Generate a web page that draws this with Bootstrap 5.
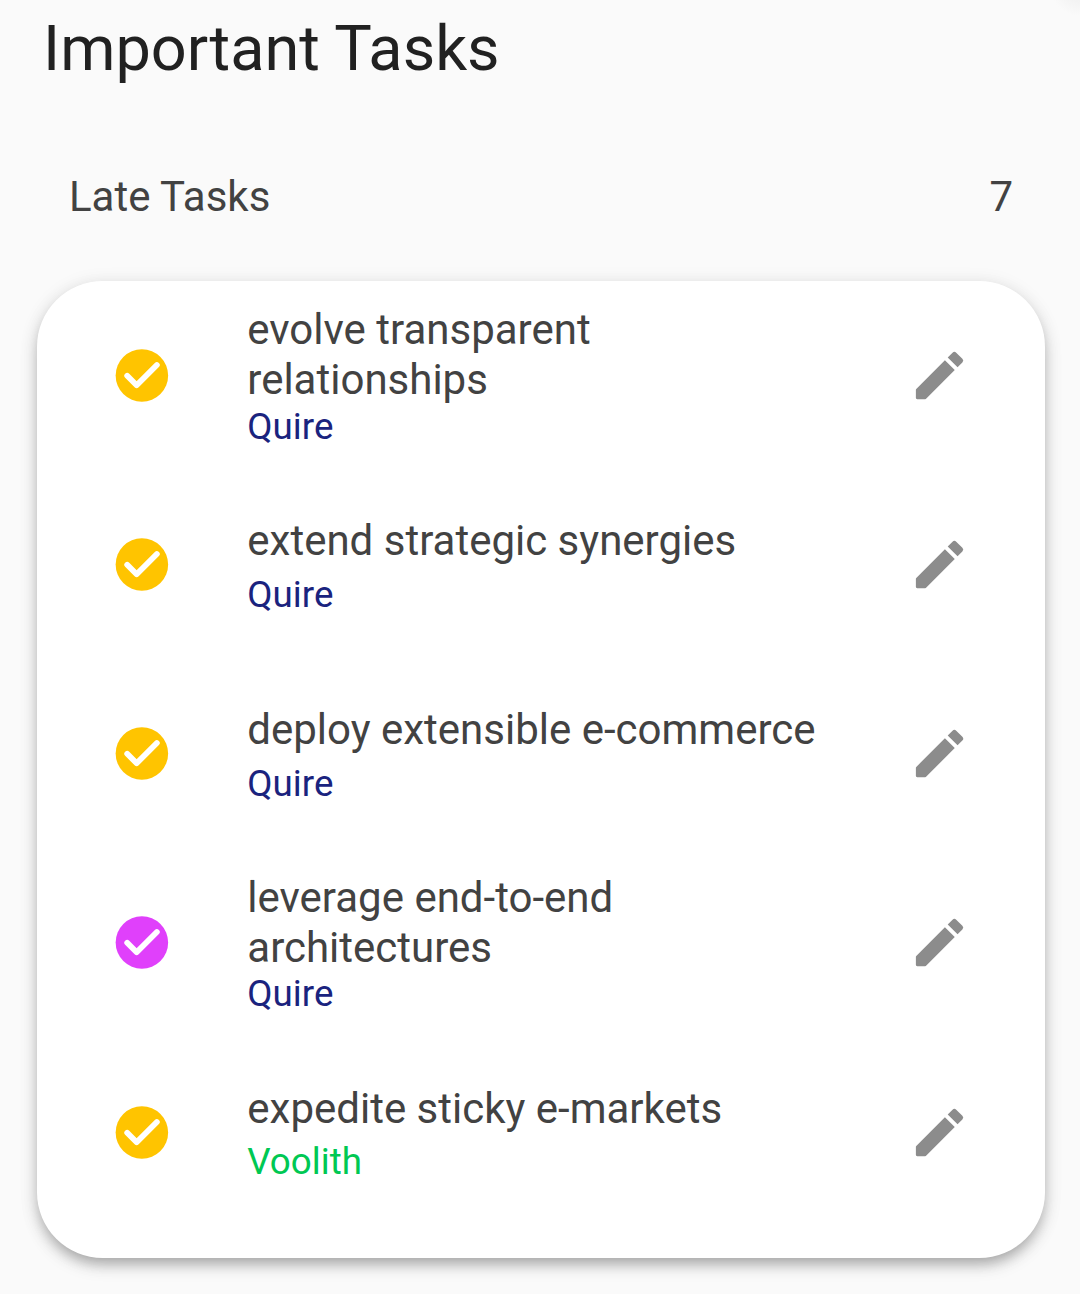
<!DOCTYPE html>
<html lang="en">
<head>
<meta charset="utf-8">
<meta name="viewport" content="width=device-width, initial-scale=1">
<title>Important Tasks</title>
<link href="https://cdn.jsdelivr.net/npm/bootstrap@5.3.0/dist/css/bootstrap.min.css" rel="stylesheet">
<style>
html,body{height:100%;overflow:hidden}
body{background:radial-gradient(circle at 1080px -14px,#ececec 0,#fafafa 30px) #fafafa;font-family:Roboto,"Liberation Sans",sans-serif;color:#424242}
.page-title{font-size:63px;line-height:74px;font-weight:400;color:#212121;padding:12px 0 0 43px;white-space:nowrap}
.section-head{font-size:42px;line-height:50px;padding:0 67px 0 69px;margin-top:86px}
.task-card{margin:58.7px 35.5px 0 37px;height:977.6px;border:0;border-radius:65.7px;box-shadow:0 8px 12px -3px rgba(0,0,0,.19),0 8px 17px rgba(0,0,0,.13),0 3px 20px rgba(0,0,0,.09)}
.task-row{height:189.2px;padding:0 73.5px 0 73px}
.task-row svg{width:63px;height:63px;flex:none}
.task-text{width:600px;margin-left:74.3px;margin-right:auto;align-self:flex-start;padding-top:46.1px}
.task-text.two-line{padding-top:24.5px}
.task-name{font-size:42px;line-height:50px;white-space:nowrap}
.task-project{font-size:36.75px;line-height:44px;margin-top:6.7px;color:#1a237e}
.two-line .task-project{margin-top:-.3px}
.task-text .project-green{color:#00c853}
.amber{color:#ffc400}.purple{color:#e040fb}.pen{color:#8c8c8c}
</style>
</head>
<body>
<svg class="d-none">
<symbol id="check" viewBox="-.15 0 24 24"><circle cx="12" cy="12" r="10" fill="currentColor"/><path d="M6.4 12.1 10 15.7 17.7 8" fill="none" stroke="#fff" stroke-width="2.2" stroke-linecap="round" stroke-linejoin="round"/></symbol>
<symbol id="edit" viewBox="0 0 24 24"><path fill="currentColor" d="M3 17.46v3.04c0 .28.22.5.5.5h3.04c.13 0 .26-.05.35-.15L17.81 9.94l-3.75-3.75L3.15 17.1c-.1.1-.15.22-.15.36zM20.71 7.04a.996.996 0 0 0 0-1.41l-2.34-2.34a.996.996 0 0 0-1.41 0l-1.83 1.83 3.75 3.75 1.83-1.83z"/></symbol>
</svg>
<main>
<h1 class="page-title m-0">Important Tasks</h1>
<div class="section-head d-flex justify-content-between"><span>Late Tasks</span><span>7</span></div>
<section class="card task-card">
<div class="task-row d-flex align-items-center"><svg class="amber"><use href="#check"/></svg><div class="task-text two-line"><div class="task-name">evolve transparent<br>relationships</div><div class="task-project">Quire</div></div><svg class="pen"><use href="#edit"/></svg></div>
<div class="task-row d-flex align-items-center"><svg class="amber"><use href="#check"/></svg><div class="task-text"><div class="task-name">extend strategic synergies</div><div class="task-project">Quire</div></div><svg class="pen"><use href="#edit"/></svg></div>
<div class="task-row d-flex align-items-center"><svg class="amber"><use href="#check"/></svg><div class="task-text"><div class="task-name">deploy extensible e-commerce</div><div class="task-project">Quire</div></div><svg class="pen"><use href="#edit"/></svg></div>
<div class="task-row d-flex align-items-center"><svg class="purple"><use href="#check"/></svg><div class="task-text two-line"><div class="task-name">leverage end-to-end<br>architectures</div><div class="task-project">Quire</div></div><svg class="pen"><use href="#edit"/></svg></div>
<div class="task-row d-flex align-items-center"><svg class="amber"><use href="#check"/></svg><div class="task-text"><div class="task-name">expedite sticky e-markets</div><div class="task-project project-green">Voolith</div></div><svg class="pen"><use href="#edit"/></svg></div>
</section>
</main>
<script src="https://cdn.jsdelivr.net/npm/bootstrap@5.3.0/dist/js/bootstrap.bundle.min.js"></script>
</body>
</html>
